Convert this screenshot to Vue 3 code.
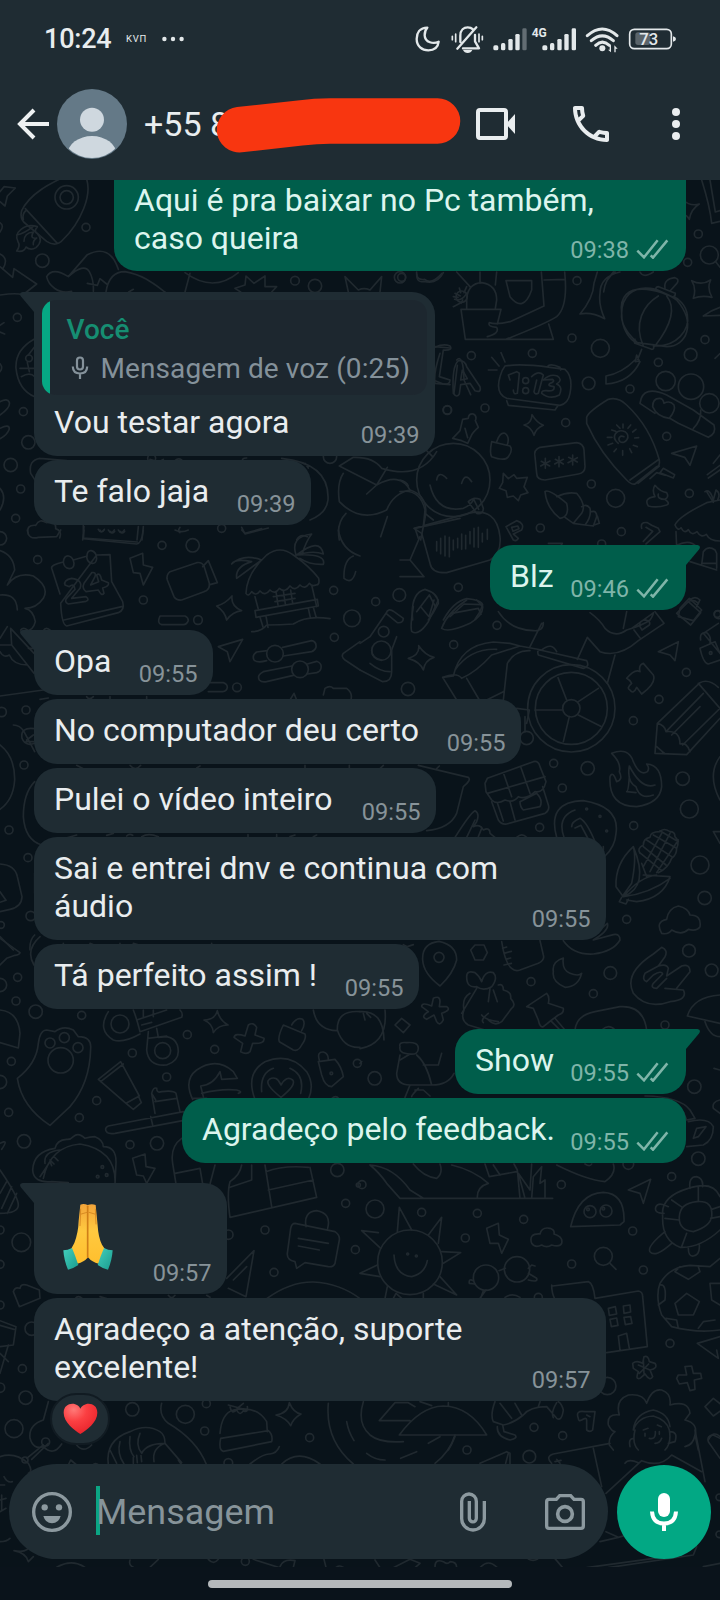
<script setup>
// Wallpaper drawings are grouped in tiles; each tile uses a 3x unit grid.
const tiles = [
  {
    at: 'translate(0 180) scale(.33333)',
    dots: [[200,52,35],[200,52,20],[258,142,12],[127,242,20],[885,302,13],[945,318,20],[1205,292,12],[52,412,12],[87,535,10],[70,695,12],[85,787,20],[32,855,20],[62,927,12],[47,1015,12],[1342,690,13],[990,830,20],[665,1045,12],[455,835,12]],
    paths: [
      'M0 35L12 20 46 24 22 48 15 78 0 65M0 128q14 8 0 28',
      'M65 92C90 40 150 10 205-15M252-20C288 40 235 135 188 180q-20 22-48 4L78 132Q58 118 65 92M76 86L172 190M80 90Q66 100 70 118',
      'M112 140C75 128 38 158 54 185q8 12-4 28 22 5 28-12 14 12 30 2 24-22 4-42-12-8 0-20M72 184q0-26 28-28-12 22 10 18-12 8-10 20M50 165q22-4 50-26',
      'M0 222q28 14 8 45M0 260L38 292 42 266 110 312 72 342M0 345Q50 338 66 344',
      'M205 290Q158 260 140 290C145 315 175 345 215 334Q195 348 180 340M205 290L262 224Q330 190 355 268M205 290Q252 248 268 275 282 300 280 334M262 310l30 6 8-20 20 16M318 336C325 290 350 275 375 275 430 285 460 310 495 336M555 278Q640 340 715 278M570 280L555 336M386 336l14-8',
      'M705 325L735 315 738 288 762 310 795 288 795 320 830 320 815 336M705 325L722 336M1045 336L1035 290 1075 330Q1092 322 1110 330L1145 290 1140 336M1250 282q0 28 22 22 40 10 58-26',
      'M102 478Q45 510 48 565 55 630 104 650M104 500L85 525M82 548L88 575M60 565H104M64 590Q90 575 104 590M0 575q10-12 0-24',
      'M0 665q22-12 28 2 4 16-28 38M0 745q28-14 28 2Q22 765 0 776M0 436l12-8M0 456l14 6',
      'M120 835Q85 840 92 880L110 908M120 835L200 842M450 838q26 10 40 0M525 842q10-10 20-2M740 834q-18 0-10 12M845 835Q990 850 984 960 980 1000 930 1020M915 850l10 14',
      'M0 925Q22 950 0 990M85 1062q-8-28 22-26 12-22 32-8 30-6 28 18 20 6 12 28M252 1040l-4 40M430 1040l-4 40M415 1040l-4 40M295 1048q8 16 18 0M325 1050q8 16 18 0M355 1050q8 16 18 0M540 1042q-8 12 0 16M725 1042l10 20 70-18M890 1080q10-20 32-10M250 1020V1074L412 1086',
      'M1305 500l45 4M1320 520q-20 60-15 90l45 4M1360 380l20-10M1370 540q20-20 22 60l20 44M1362 640l10-84M1060 832Q1120 830 1145 865 1260 900 1310 815M1018 858L1130 915 1162 862M1060 832L1018 858M1130 915L1100 942M1130 915Q1200 875 1230 930 1180 940 1160 990 1080 1030 1018 965 1010 910 1030 880M1230 930Q1290 950 1274 1020L1262 1080M1018 1080q-10-50 20-80M1162 1010l-20 60',
      'M1245 1045L1380 1015M1245 1045l10 30',
    ],
  },
  {
    at: 'translate(400 180) scale(.33333)',
    dots: [[895,162,12],[863,247,12],[928,225,27],[531,302,12],[185,350,17],[516,474,12],[601,505,27],[397,520,12],[214,527,12],[566,610,19],[775,547,12],[872,524,19],[915,479,12],[690,627,12],[142,690,12],[255,684,12],[497,728,12],[797,603,29],[873,620,38],[928,670,29],[800,769,12],[574,912,12],[647,955,27],[868,940,12],[421,1044,12],[664,1055,12],[605,1092,12],[175,1222,12],[160,900,110],[377,602,9],[377,632,9],[0,292,17],[-2,1245,19],[952,1302,10]],
    paths: [
      'M905 0Q930 80 935 130L960 124M930 0q10 60 16 96l14-4M850 60q20 20 48 12-25 15-30 46-8-14-20-14M946 244l14 18',
      'M875 302Q905 318 932 300 920 325 936 352 905 345 880 355 890 325 875 302ZM910 408Q935 390 960 382M910 408l50-2M945 535l15-14',
      'M665 400C650 290 790 330 830 360 890 430 860 500 800 500L712 488Q660 440 665 400M768 328C690 310 665 360 665 400 665 450 690 480 712 490M775 348C730 375 700 430 730 498M800 348C830 385 810 440 765 498M765 498C830 500 870 450 862 405 858 375 835 355 820 350M768 328l52 24q6-2 6-12l-50-20q-10 0-8 8ZM795 325q-5-28 30-32 15 5 5 18l-20 22M705 478q-4 8 0 12l50 18q10 0 4-14M725 508l-12 30M710 525l8 18-12 2ZM705 540Q665 580 618 588V612Q690 608 720 545',
      'M170 276L210 320M240 276V310M290 276L286 315M318 302H395V330Q370 400 330 350ZM424 276L432 378 330 425Q290 435 268 428 262 440 290 442 300 460 262 470M494 276Q505 380 470 410 440 430 318 478M432 300L494 298M200 385V355Q205 310 245 308 290 315 290 360L286 385M183 388H303L292 432M183 388L196 478H460L446 432M200 340q-15 25-36 18M165 340l16 8M178 324l4 14M200 320l-8 18M160 350l14 2M183 370l5-10',
      'M660 276Q600 290 600 340 595 375 614 416 575 395 540 402 580 355 582 310L592 276M645 276q-30 20-34 60M640 276q-15 20 0 0M720 276q10 20 40 0M50 276q-2 26 24 22 20 18 52-18',
      'M105 502Q130 490 150 498 160 512 130 510L118 590Q135 595 150 600 150 615 130 612L105 602M160 640Q155 560 175 542 195 540 200 560L240 620Q245 640 225 632L210 610 182 614 178 642Q170 655 160 640M182 600l5-30 15 26Z',
      'M315 558Q360 550 450 562L495 568Q520 590 510 640 505 670 480 676L320 655Q285 640 300 590 305 570 315 558ZM330 600L325 585 350 575 358 580 352 640Q340 645 340 630M320 662l5 14 140 14 8-12M442 560q8-12 38 2l2 8M303 518l12 28M275 532l22 26M265 570h26M395 590Q415 570 430 585L415 640Q405 645 402 635L410 600M430 600Q450 580 472 588 490 600 470 612 490 620 478 645 450 660 425 640 425 630 440 632 465 635 462 620 440 618 450 610 466 605 458 598 445 598 430 600',
      'M560 712Q565 695 625 658 655 650 680 675 750 740 778 840 780 860 770 860L705 912Q695 915 680 900 600 820 560 730ZM690 900l84-60M714 910l64-52M780 878L790 865 824 884 820 894ZM770 878l25 8M770 878l-20 18M650 735l10 10M635 750l12 4M622 772h14M624 795l14-5M642 815l7-8M668 826v-14M695 818l-6-12M712 800l-12-4M716 773l-12 1M708 748l-10 8M692 735l-8 10M669 732v12M655 790C630 770 650 745 675 755 695 770 675 795 660 785 652 775 660 765 672 770',
      'M720 670C725 630 755 625 800 645L880 690 942 735Q950 760 925 772L835 730 808 714M720 670L765 700M808 715Q770 710 758 680 758 655 778 655 790 655 792 670 810 660 822 675 828 690 808 715ZM902 690Q905 720 880 745',
      'M205 715Q205 700 220 702 232 708 226 722L235 742Q220 755 215 765L203 790 185 782 158 775 180 752 188 718ZM195 745l8 28M275 785L330 798Q340 810 325 830 315 845 275 830 268 820 275 785ZM290 785Q300 755 315 760 330 770 322 795M372 735Q395 730 396 704 410 728 430 736 408 745 402 766 395 742 372 735Z',
      'M405 830Q400 810 420 802L530 788Q550 790 552 810L555 860Q555 878 535 882L435 900Q410 900 410 880ZM436 835v30M424 844l25 14M422 858l28-15M477 830v30M466 838l24 14M464 852l26-14M518 825v30M506 832l26 14M504 848l28-15',
      'M815 820L890 798 870 856 854 832ZM940 850l20-25M922 884l38-28M925 894l35-24M745 978Q730 955 765 950 755 930 765 916 780 935 800 938 808 950 795 958 812 970 800 975 770 985 745 978M775 942q-4 16 20 16',
      'M310 880L325 896 342 884 350 895 382 892 372 920 384 938 362 945 355 962 340 948 322 952 318 932 298 925 308 908ZM435 935Q445 925 500 970 510 1010 480 1015 440 985 435 935M470 950Q500 935 530 940 560 975 545 1000L520 1030 495 1012M545 980Q560 970 570 985 575 1010 555 1035L520 1030M575 995Q590 990 590 1010L580 1038 555 1035M592 1008l6 22-18 6',
      'M110 900Q115 870 140 895M185 910Q195 875 215 905M90 915Q110 1000 190 985 215 975 222 955M205 965Q220 950 240 958L250 985Q250 1005 230 1000ZM222 960l14 28M78 810l20 20M0 900q20 5 25 18M75 1000L100 1020M0 935Q60 925 75 990L70 1040M42 1045L205 1000Q290 980 300 1070 305 1120 270 1140L140 1178Q95 1180 90 1150L65 1060ZM110 1085v28M122 1075v46M135 1068v60M148 1072v58M160 1080v30M173 1075v28M185 1062v46M197 1066v40M210 1055v36M222 1045v56M235 1042v60M247 1060v26M262 1048v30M60 1070L30 1140 72 1190H0M30 1140H0',
      'M318 1040L350 1022Q375 1030 365 1050L340 1062 355 1075Q350 1085 340 1080ZM335 1042l18-4 4 8-18 8ZM725 1045Q720 1025 742 1028L755 1036 775 1045 780 1055 738 1092M738 1042l20 12-28 30M445 1090h42l-6 10',
      'M825 1035Q835 1010 920 968L960 960M920 935l20 32M915 935q15-10 25 25l8-30q15 10 5 30M825 1035q8 20 18 8 10 20 22 6 10 20 26 6 12 20 28 8 10 20 41 20M828 1055L830 1100M905 1155L910 1115Q925 1095 945 1110L950 1120V1165M830 1096q40-20 60 5M870 1145L950 1170M905 1150h45',
      'M38 1320Q30 1240 75 1228 115 1240 115 1270 100 1300 85 1320M50 1295l38-50 18 35M130 1320Q160 1265 200 1256 245 1260 248 1275 240 1300 225 1318M150 1310l42-38 52 2M840 1285L868 1255 905 1290 880 1322 835 1310ZM870 1260Q885 1245 900 1260L890 1280',
    ],
  },
  {
    at: 'translate(0 530) scale(.33333)',
    dots: [[486,46,12],[578,46,20],[113,89,12],[430,210,12],[594,270,13],[1001,181,12],[1056,265,25],[1003,322,12],[825,371,25],[900,418,25],[711,472,13],[5,546,14],[78,540,12],[72,705,12],[27,900,12],[84,983,12],[92,1158,14],[3,1185,10],[0,25,20]],
    paths: [
      'M0 62Q40 75 44 120L22 165Q50 125 100 138 150 170 130 205 110 235 75 235 100 240 106 275 100 300 80 303M0 195Q50 190 52 240',
      'M180 192L155 115Q152 105 190 96M220 90L262 78M290 75L330 74 335 155 368 215Q375 240 355 248L200 288Q185 285 182 220ZM192 270L365 230M335 155L350 182M190 96Q192 76 206 78 220 82 222 100 222 116 208 116 192 114 190 96M260 80Q262 60 274 62 290 66 290 86 288 102 276 100 262 98 260 80M195 165Q190 150 215 145 250 150 240 175L215 205 258 200Q270 210 258 214L205 222Q190 215 202 202L225 178Q222 158 208 170ZM252 160L275 128Q290 125 285 140L272 165 296 155 290 135Q300 125 305 150L325 158Q330 168 308 174L312 190Q305 200 295 180L258 185Q245 175 252 160',
      'M390 85L428 70 430 105 458 112 430 165 420 130 400 128ZM510 125L590 98Q605 95 612 108L628 160Q630 180 612 185L545 210Q530 212 522 200L502 150Q498 135 510 125ZM608 110L625 92 652 158 630 164',
      'M738 190Q740 130 800 75 840 45 880 75 930 110 956 145 960 165 948 165 935 170 928 160 915 180 900 165 885 185 870 168 855 190 838 175 825 195 810 180 795 200 780 183 768 200 755 185 745 202 738 190M695 102Q730 70 785 90L710 145Q705 110 755 95 705 85 695 102M888 75Q870 20 935 12 920 30 905 75M890 75Q960 20 970 72 940 60 890 75 980 70 970 103 930 105 900 85M765 200L775 238M935 165L950 230M765 242L952 208 955 228 768 262ZM780 262l10 32M798 258l6 34M925 235l6 28M940 232l8 28M820 200l65-10M825 215l60-10M828 185l6 40M850 182l6 40M872 180l6 40M755 305Q785 305 800 285 840 285 880 282 920 255 990 266',
      'M650 228Q675 222 696 198 692 228 725 242 698 245 680 270 675 245 650 228ZM480 258H555Q565 262 565 272 560 284 550 284H485Q470 280 480 258ZM655 350L728 328 690 395 682 365ZM802 362L770 366Q755 375 762 390 772 400 800 392M848 352L935 332Q950 335 948 352 945 362 935 365L850 378M876 408L790 425Q770 435 778 450 785 458 800 455L880 436M922 402L950 394Q968 400 962 418 960 425 950 428L922 432M630 458H670Q682 462 682 472 680 484 668 485H625M970 495L975 475Q990 465 1000 475L1040 475Q1060 490 1052 512M870 510L882 490 890 510M1080 335L1030 370Q1022 380 1035 390L1080 420M1015 0Q1025 60 1080 78M1032 145Q1030 90 1060 78M1032 145q25 20 35-20M1012 0',
      'M82 0Q85 30 115 22L170 20 182 0M252 0L250 26 410 42Q425 40 430 0M300 0q5 10 12 0M330 4q8 10 14 0M360 4q8 10 14 0M525 0q20 10 40 0M725 0l10 10 50-14M0 345L35 345 102 430M35 345L32 295 102 370M22 290L0 325M0 365q10 20 28 10Q40 405 82 405M62 300q8-10 20 0M130 302q8-14 22 0M85 355h18M0 498L130 480',
      'M40 585q20 0 32 20L104 665M104 596Q60 590 66 625 75 650 104 640M80 630l20-15M78 635h22M0 645Q45 680 44 750 40 810 0 838M104 755Q70 790 70 860 75 930 125 945L230 915M120 508l25-4M260 500q8 12 20 0M330 500v10M440 500v10M230 706l20 10M390 706q16 20 32 0M590 714l10-6M915 706v10M1048 706v10M320 916l20-6M380 918q8-8 18-2M425 920q20-12 50 0M744 914v10M830 914v10M870 920l15-5M940 920l10-5',
      'M0 1002Q45 1005 52 1040L66 1100Q65 1130 30 1138L0 1145M0 1085l18 26-18 6M0 1220L40 1260M104 1215Q88 1230 90 1260M104 1030v60M190 1240v8M270 1240l20 8M360 1240v8M400 1240l20 6M635 1240v8',
    ],
  },
  {
    at: 'translate(360 600) scale(.33333)',
    dots: [[411,76,12],[281,134,12],[71,95,16],[64,152,29],[144,267,20],[634,325,26],[634,325,108],[634,325,131],[820,362,12],[897,298,12],[979,217,12],[1052,159,4],[500,414,20],[581,490,12],[683,505,20],[607,564,12],[968,536,20],[988,627,27],[539,682,12],[821,677,12],[740,693,3],[720,649,3],[680,627,3],[1020,795,27],[1034,894,20],[800,958,12],[237,1072,15],[987,1052,19],[1055,1111,19],[751,1119,19],[513,1145,12],[700,1181,12],[915,1275,12],[47,5,12],[1075,44,12]],
    paths: [
      'M0 210L68 245Q95 245 95 215V150L110 110M30 110L78 40M0 130L30 110M78 40Q85 22 102 35L130 55Q130 70 112 68ZM30 190Q60 215 90 215M65 180Q35 175 35 150',
      'M145 175Q180 165 176 137 195 165 222 172 195 180 190 210 180 185 145 175ZM160 20Q150 80 155 94 175 110 205 65L235 0M182 20l25 30 15-50M245 85Q260 40 320 0M245 85Q265 100 330 70 370 45 368 20L350 0M275 40l80-15 8 18M1075 70L1030 100 1080 160M950 40L985 5 1022 38 992 75ZM985 5Q1000-5 1015 10M1022 120Q1018 95 1040 98 1055 110 1050 130M1020 145L1065 125 1080 160M1020 145Q1030 190 1045 192L1080 180',
      'M415 35Q450 90 520 92 550 95 550 68M545 70L510 140M690 38Q720 60 735 85 765 115 800 90 850 75 870 60 880 45 880 38M800 35L790 85M815 85L878 40M822 90l20 26M840 80q-4-20 18-20 15 5 10 15l-22 15ZM885 35L912 70 835 122Q775 175 720 155L682 112 652 178M765 165L742 250',
      'M248 232Q290 215 305 235 350 215 395 165L480 138 545 150Q575 125 590 155M248 232L290 300M248 232L280 228Q300 135 400 126L450 130 480 138M285 210Q330 145 410 148M320 235L358 300M430 300L442 190Q465 150 510 152M380 300L430 275M540 150L680 182Q690 200 670 205L535 165Q530 150 540 150M525 330H606M594 233L620 300M655 305L715 265M655 345L725 380M628 350L610 425M500 370L508 330 470 325M495 395V350',
      'M895 155L955 125 945 182 930 165ZM800 235Q825 205 840 215 835 195 850 190L880 225Q890 250 845 282L830 262Q820 285 810 270 798 265 815 250 810 240 800 235ZM885 460L892 370 1020 248Q1045 235 1075 262M885 460L980 464 1080 355M892 370Q915 375 918 395 960 390 960 432 980 425 990 455M918 395L1030 280M935 405L1020 320M968 435L1080 325M1015 250L1080 325M890 440L915 462',
      'M755 460Q805 440 820 485 840 530 862 515 870 505 860 492 905 495 905 560 900 610 830 620 745 620 750 530 758 510 770 545 790 540 778 515 785 490 755 460M808 498Q800 545 828 560 840 600 880 585M808 498Q845 570 885 555M808 530Q805 575 800 575L828 578',
      'M375 550L382 535 520 485Q535 480 540 500L558 545Q550 580 525 575 500 600 475 590 460 610 435 600 410 615 395 600L378 575ZM382 580L555 530M430 518L455 590M482 500L510 580M395 605L415 660Q425 675 440 672L555 640Q570 630 565 615L548 560M450 605L465 660M412 608l18 55M480 605L530 580Q550 600 540 620L490 630Q480 620 480 605M60 506l10-10M230 506l8-8M175 496L325 532Q335 540 310 560L290 640Q270 685 200 692M285 712Q330 640 345 632 360 640 350 665L340 680Q360 670 370 690 390 680 390 700L405 712M345 660L320 712M365 685l-10 25M470 712q16-14 30 0',
      'M590 712Q560 605 670 602 780 620 768 700 765 740 735 768M612 712Q590 650 645 630M635 680Q635 665 660 655 680 665 705 725 M645 684l18-8 20 38M730 740v15M1080 470q-40 55 0 130M1060 695l20 35M1060 695h20',
      'M820 740Q765 790 768 860L790 890Q870 860 820 740M820 740Q830 775 815 850L790 885M850 825L930 830Q910 895 830 905L800 900M845 790L860 830M790 890Q840 830 890 825M790 890Q870 880 930 835M785 892L778 905 798 912 805 898M842 760L905 812M850 740L918 795M860 720L935 770M880 705L950 745M900 692L955 725M850 800L905 700M870 815L930 700M890 818L955 720M840 760Q830 745 850 735 850 715 870 712 870 695 900 695 910 682 930 695 945 695 945 710 960 725 950 745 950 765 935 775 925 805 895 818',
      'M905 1000Q885 965 920 958 925 925 955 918 985 925 990 945 1025 945 1020 980 1010 995 985 988 965 1008 935 990 925 1005 905 1000M610 1022Q640 1065 700 1062 760 1055 780 1020 780 1000 760 1004L700 1020Q750 990 742 970L725 985M425 1025Q435 1090 455 1105 465 1115 480 1110L535 1090Q555 1080 550 1065L540 1022M428 1045l12-4M432 1060l22-6M438 1078l14-4M432 1095l22-5',
      'M188 1080Q185 1030 237 1024 290 1035 290 1080 280 1120 240 1158 190 1120 188 1080M332 1050L345 1035H372L382 1058 370 1080H345ZM130 1034l12 6 18-6M580 1115Q575 1085 610 1074 605 1110 630 1120 655 1130 665 1120 655 1160 615 1162 575 1145 580 1115M820 1180Q790 1120 880 1062L905 1042Q925 1050 915 1070L895 1098 M895 1098Q920 1090 925 1105L920 1128 965 1098Q990 1090 990 1115L950 1165M895 1098L855 1120Q845 1140 860 1145L880 1125Q905 1110 908 1122L880 1150Q870 1165 890 1165L920 1135M915 1165L970 1170Q985 1200 930 1205 860 1230 820 1180',
      'M320 1130Q320 1110 345 1118 360 1130 365 1145 375 1110 400 1118 415 1135 395 1160 370 1175 350 1160 320 1165 320 1130M350 1165L305 1240M390 1165L385 1205M415 1155Q430 1150 430 1170 455 1175 452 1195 470 1215 455 1225L425 1265Q405 1280 385 1260M400 1170l12 35M385 1240q-25 20-15 28M365 1245q10 15 50 20M330 1180Q305 1195 312 1230 300 1260 325 1275L375 1290M185 1220Q185 1205 215 1218L220 1195Q240 1185 240 1205L238 1220 260 1220Q275 1230 245 1240L250 1260Q240 1280 230 1265L222 1245 200 1258Q180 1250 205 1235ZM105 1275L125 1255 150 1275 130 1298ZM500 1220L560 1180Q570 1190 565 1210L610 1225Q612 1240 595 1245L575 1260 550 1280Q540 1285 535 1260L520 1225ZM575 1265L600 1290M585 1255L615 1290M645 1290Q650 1245 705 1235L780 1220Q850 1215 860 1290M725 1290q22-20 40 0M1080 1185Q1000 1190 982 1248L1080 1270M1035 1265Q1050 1310 1080 1310M0 1235Q70 1230 72 1320M10 1240l5 20M20 1240l12 12',
    ],
  },
  {
    at: 'translate(0 930) scale(.33333)',
    dots: [[53,142,12],[0,165,20],[48,213,12],[107,245,20],[245,256,12],[562,314,12],[34,394,12],[397,369,12],[644,358,12],[500,441,12],[360,282,27],[488,362,24],[150,339,15],[193,323,15],[234,353,15],[182,391,38],[0,456,20],[26,547,12],[290,512,12],[238,563,12],[72,634,20],[390,644,12],[471,640,20],[307,711,4],[293,740,4],[320,735,4],[1012,720,20],[1037,820,12],[795,900,12],[685,914,14],[64,937,28],[0,900,12],[0,1003,12],[1066,959,12],[822,1027,12],[95,1196,20],[994,430,4],[1072,400,12],[1075,765,6]],
    paths: [
      'M0 25L60 68Q58 74 45 76L20 85 0 105M102 105Q75 60 120 20M0 240Q55 245 60 310L55 354 0 338M52 445Q110 400 115 340 120 300 140 300L165 305Q190 285 220 300L235 320Q275 320 272 355 270 460 210 530L150 586Q65 530 52 445',
      'M325 245Q290 300 340 330 370 340 420 312M400 240Q410 265 420 305M420 305L545 262Q550 250 540 240M410 270L500 240M425 285l30-8M430 240v20M460 240v20M445 305L440 360Q445 410 500 405 545 390 532 345 525 325 500 320L475 322 470 295M443 325L500 318M295 448L362 395 418 498 378 520ZM302 455L370 402M378 520L400 538 424 518 415 498',
      'M465 550L455 490Q460 470 470 475 470 490 485 485 520 480 528 490L540 545M465 515L530 505M455 490l12 20M550 545L325 588Q310 595 322 608 328 612 345 610L548 572M452 560L458 585',
      'M612 270Q645 270 652 242 658 270 684 285 655 285 640 308 638 280 612 270ZM702 322Q705 308 735 318L745 285Q760 275 770 292L765 315 792 325Q795 342 758 340L750 365Q740 375 722 365L728 340ZM850 285L915 312Q920 325 905 345 895 365 880 360L838 335Q832 322 850 285ZM875 285Q890 260 908 268 918 280 905 302M955 395L1005 388Q1025 410 1030 440L995 470Q975 470 965 435ZM958 390Q950 365 970 366 985 370 985 388M940 240Q950 300 1010 302M1080 245Q1010 240 1012 300 1030 355 1080 352',
      'M578 508Q550 450 590 420 650 380 700 425L712 445 665 448 660 425Q640 465 602 468L610 500M605 490q60-15 105-10 20 5 5 10M580 505h40M765 508Q735 430 795 395 870 365 920 425 945 465 925 508M785 485Q780 430 820 415M870 415Q915 435 902 490M843 502Q790 460 808 448 830 435 843 465 860 435 878 450 890 465 843 502ZM995 506q12-12 22 0',
      'M98 720Q100 665 165 655 170 630 200 628 210 630 220 620 235 605 255 625 270 620 285 620 310 630 310 650 350 650 348 700L345 762M98 720Q100 760 155 755L205 758M130 745Q150 650 240 642 350 660 345 762M135 700Q130 665 180 660M150 690l12 12M162 680l12 12M120 740l30-45 5 12M0 640q28-15 5 18',
      'M398 685L435 672 438 710 465 715 440 760 430 738 410 735ZM545 625Q510 650 518 700L528 762M525 730L600 715M600 715L608 762M645 705L630 762M725 705Q720 735 690 755M755 705v45L690 772M690 755Q680 790 690 862M795 705L815 830M690 862L950 802 930 712M805 780L940 750M798 725Q850 705 925 712M0 720Q55 800 55 825 55 850 0 850M0 790L20 755M5 835L35 770M22 850L50 790',
      'M918 890Q910 845 950 842 995 850 983 895M885 880L1005 905Q1020 915 1018 930L1005 1000Q1000 1012 985 1010L915 998 890 1015 885 995Q860 990 862 970L872 895Q875 880 885 880ZM895 925L985 940M895 948L958 960M680 1045L762 962 738 1100 685 1075M700 1050L740 1010M800 1106Q870 1055 940 1056 1020 1060 1080 1106M40 1085Q45 1070 60 1075 62 1060 80 1065L118 1080 120 1105 58 1130ZM0 1172L48 1190 40 1245 0 1250M0 1186l42 12M505 1096q10 14 20 0M620 1096l10 6M225 1106q10-12 22 0M300 1100l20 6M730 1100',
    ],
  },
  {
    at: 'translate(360 1010) scale(.33333)',
    dots: [[44,205,20],[1003,230,20],[1015,446,20],[6,524,12],[45,597,27],[185,607,12],[352,610,12],[491,628,12],[604,524,12],[316,684,12],[935,500,12],[818,663,12],[690,605,18],[738,603,18],[635,762,12],[850,780,12],[730,739,27],[150,757,97],[378,803,38],[471,778,38],[143,732,3],[169,738,3],[522,1252,12],[608,1277,12],[930,1000,12],[742,1128,26],[535,862,12],[805,462,16],[684,598,4],[730,596,4]],
    paths: [
      'M75 0q10 100-75 116M120 110Q115 95 140 98 175 95 175 115 175 135 150 132 115 130 120 110M120 135L110 190Q110 225 150 225H215Q200 160 170 135M150 132L120 150M190 165H235L245 130M215 225Q265 225 282 190M150 225L135 262M165 240h25l20 18M175 235q-20 20-20 25M0 160q10-10 0 0',
      'M30 465Q60 490 80 520L120 565H578M30 465Q100 470 150 540L190 565M160 462Q190 500 230 505 250 490 240 462M275 465Q340 480 385 520 350 530 352 565M375 462L388 500 470 485M400 465l20 30M480 565L472 480 462 462M495 565L475 490 510 540 515 462M515 565L520 500 545 470 540 520 555 510V565M590 465Q680 510 735 515 770 490 760 462M675 462q15 10 20 0M855 258Q960 260 990 300L1005 325 980 330M925 270Q970 290 980 330M985 335Q1045 320 1060 350 1060 390 1030 405L980 410M1000 385L1010 355 1038 350 1015 380ZM1080 270Q1055 275 1060 295L1080 310M1062 175l18 5',
      'M632 650Q655 550 730 547 795 550 792 635L780 645ZM805 540L872 508 850 580 840 550ZM380 655L415 640 418 675 445 688 425 730 415 700 390 700ZM515 700Q505 670 540 672 545 650 570 655 585 660 582 672 610 680 605 700 600 712 575 705 560 715 545 705 525 715 515 700ZM750 760L768 778',
      'M55 668L5 662 62 715M52 765L0 790 60 800M112 665L118 592 155 660M205 675L245 622 235 700M245 725L302 728 250 760M240 800L290 855 220 822M75 865L82 830M100 865L108 850 125 865M190 865V850M102 735Q105 795 155 800 195 790 202 752M417 782L436 775M340 812Q325 805 328 820L345 822M505 775L515 765 525 768M505 790L530 805Q535 818 505 810M370 842L362 865M360 865L378 840M435 862q22-15 45 0',
      'M575 825Q575 850 585 868M578 828L685 815Q700 820 705 865M705 865L835 843Q848 845 848 860L862 1010 740 1028M745 895L766 890 770 912 748 916ZM790 888L810 885 812 906 792 910ZM750 928L770 924 774 946 754 950ZM792 922L812 920 816 940 796 944ZM780 1020L775 978 800 970 808 1015',
      'M908 620Q900 560 985 535 1060 510 1080 560M908 620Q905 690 960 712 1020 715 1080 660M958 620Q960 580 1010 575 1060 570 1055 620 1050 650 1000 665 955 660 958 620ZM990 535Q985 500 1010 500 1030 505 1028 530M912 610Q880 610 888 590 895 575 925 590M915 665Q860 710 870 725 885 745 935 700M985 715Q985 740 1000 738 1020 735 1018 705M915 625l42 5M935 570l32 22M1015 530v42M965 710l15-40M1080 620l-28 5M1080 590l-25 8',
      'M1080 960Q1010 970 935 950L905 915Q885 860 900 820 930 770 990 766L1050 770 1080 745M945 880L980 850 1018 875 1000 915H955ZM945 785L985 808 1020 785M945 785L960 770M1020 785L1015 770M900 825Q920 820 915 870L895 885M1050 820L1080 820M1050 820L1055 870 1080 885M918 925L950 930 955 955M1015 955L1030 935 1065 930M1012 1000L1080 980M1012 1000L1075 1045 1070 1020',
      'M818 1060Q830 1050 848 1060L852 1040Q865 1035 868 1055L885 1060Q895 1075 870 1080L878 1100Q870 1115 855 1092L840 1105Q825 1110 835 1085L820 1075ZM835 1065l35 15M850 1050l2 40M838 1090l28-28M950 1105L955 1095 980 1095 975 1070 995 1068 1000 1090 1022 1090 1025 1105 1003 1110 1005 1138 990 1142 982 1118 958 1122ZM1035 1190L1060 1165 1085 1185M1035 1190L1060 1218 1085 1200',
      'M745 1245Q740 1210 778 1215 765 1170 805 1155 850 1150 860 1180 875 1135 905 1140 935 1150 930 1185 985 1170 990 1210L975 1230Q1015 1240 1005 1275 1000 1305 975 1310M745 1245Q755 1265 765 1265 745 1280 748 1305L760 1320M820 1260Q825 1210 880 1200 925 1210 930 1250M820 1260Q835 1220 880 1218 920 1230 928 1260M825 1260Q815 1300 835 1320M928 1260Q935 1300 915 1320M820 1285Q805 1285 810 1310M930 1265Q955 1265 945 1295L925 1300M850 1260l14-5M892 1245l12 5M855 1270v8M898 1265v8M868 1285q20 5 18-20M885 1300q15 0 20-15M1005 1275L1015 1320M1045 1290Q1060 1260 1080 1280M655 1225Q645 1200 675 1205L705 1205 698 1260Q690 1268 680 1260V1230Q680 1220 665 1230 655 1235 655 1225M680 1215l10 5',
      'M10 1175Q-10 1240 30 1275 60 1300 130 1295M58 1232L105 1178H145L165 1190M58 1232H150M118 1275Q180 1190 250 1188 330 1190 380 1275ZM205 1300L240 1280M285 1280Q275 1305 265 1320M180 1175l35 12M265 1178v10M405 1175Q390 1215 400 1235L430 1245Q460 1240 490 1215M420 1180L455 1225M465 1180L485 1215M490 1215Q510 1190 560 1190L590 1225Q605 1235 610 1200 605 1180 595 1175M540 1175l-5 15M590 1178q-18 30-10 45M412 1250Q410 1280 450 1290 475 1285 465 1275L432 1265 428 1245',
    ],
  },
  {
    at: 'translate(0 1290) scale(.33333)',
    dots: [[67,236,12],[0,293,14],[77,323,20],[42,416,27],[137,456,12],[397,358,20],[556,373,27],[614,423,12],[929,443,12],[619,341,12],[685,519,13],[736,814,12],[75,510,9],[0,45,12]],
    paths: [
      'M0 190L25 215M0 250L25 165M145 335L130 390Q85 405 90 445 100 480 130 470 160 500 185 462M130 465L80 505M145 460L95 508M230 465q20 25 45 0M85 520Q100 545 85 550M0 500Q45 485 85 520M205 525L212 510 230 525M278 525q8-8 18 0M12 560q10 20 25 15M0 585h14M0 630l18-5M0 665l18-10M5 615v45M0 755Q20 755 30 745',
      'M325 525Q315 450 390 425 440 400 480 425 495 435 495 460L545 518M495 460Q455 475 462 515M420 430Q405 465 425 490 440 460 495 460M390 440Q385 480 402 500M360 455Q350 490 372 522M330 480L350 520M400 520v-18M412 518l-2-22M425 515l-2-18M535 510l10 15',
      'M485 340Q475 375 505 400 590 450 620 525M660 430Q665 370 700 360 770 345 800 395L802 425M662 445L805 422Q820 435 815 455L670 484Q655 480 662 445ZM690 350Q695 375 710 360 720 380 730 362 745 370 742 350M685 345l55 15M700 365l30-25M828 375Q865 370 868 338 880 368 903 372 880 385 872 407 860 385 828 375ZM750 522Q790 490 810 492 830 490 838 470M845 522Q895 475 960 522M985 340Q975 450 1060 522M1040 395Q1045 425 1062 452',
      'M42 782Q85 790 90 765M42 782Q80 790 85 815L100 800M170 832Q215 805 255 832M390 810Q385 825 400 832M475 808L450 832M625 808q16 18 30 0M760 808L835 832M840 830Q850 805 885 812L880 832M972 808L978 832M1008 832q12-8 22 0',
    ],
  },
  {
    at: 'translate(360 1400) scale(.33333)',
    dots: [[321,150,12],[508,170,19],[1078,292,10],[1078,403,10]],
    paths: [
      'M20 160Q45 180 75 180M122 175L170 155M285 105Q270 155 225 190M360 190L440 155 450 160V192M445 160l-8 30M575 190Q555 170 580 162L750 130M585 185l18-4M590 178l10 12M700 145L725 260M738 280L845 182Q900 205 935 165L1025 215M1005 90L1035 245M795 190Q805 175 835 188M1045 125Q1040 105 1060 105L1080 115M1045 125L1080 175M738 395L775 412 720 425M775 412L800 405M680 503L920 470M745 503L1000 465 1010 440M1030 500L1080 490M45 480L60 503M100 503L150 478 180 490 165 503M225 500Q225 475 250 485 262 495 270 485 290 485 290 503M360 503Q385 475 412 503M505 477q14 8 28 0M585 476L608 503',
    ],
  },
]

const messages = [
  { id: 1, side: 'out', text: 'Aqui é pra baixar no Pc também,\ncaso queira', time: '09:38', w: 572, gap: 0, cut: true },
  { id: 2, side: 'in', tail: true, quote: true, text: 'Vou testar agora', time: '09:39', w: 401, gap: 21 },
  { id: 3, side: 'in', text: 'Te falo jaja', time: '09:39', w: 277, gap: 4 },
  { id: 4, side: 'out', tail: true, text: 'Blz', time: '09:46', w: 196, gap: 20 },
  { id: 5, side: 'in', tail: true, text: 'Opa', time: '09:55', w: 179, gap: 20 },
  { id: 6, side: 'in', text: 'No computador deu certo', time: '09:55', w: 487, gap: 4 },
  { id: 7, side: 'in', text: 'Pulei o vídeo inteiro', time: '09:55', w: 402, gap: 4 },
  { id: 8, side: 'in', text: 'Sai e entrei dnv e continua com\náudio', time: '09:55', w: 572, gap: 4 },
  { id: 9, side: 'in', text: 'Tá perfeito assim !', time: '09:55', w: 385, gap: 4 },
  { id: 10, side: 'out', tail: true, text: 'Show', time: '09:55', w: 231, gap: 20 },
  { id: 11, side: 'out', text: 'Agradeço pelo feedback.', time: '09:55', w: 504, gap: 4 },
  { id: 12, side: 'in', tail: true, pray: true, time: '09:57', w: 193, gap: 20 },
  { id: 13, side: 'in', text: 'Agradeço a atenção, suporte\nexcelente!', time: '09:57', w: 572, gap: 4, heart: true },
]
</script>

<template>
  <div class="phone">
    <header class="top">
      <div class="status">
        <span class="clock">10:24</span>
        <span class="vpn">KVП</span>
        <svg class="more" width="22" height="6" viewBox="0 0 22 6"><circle cx="2.4" cy="3" r="2.2" /><circle cx="11" cy="3" r="2.2" /><circle cx="19.6" cy="3" r="2.2" /></svg>
        <svg class="tray" width="270" height="34" viewBox="160 65 810 102">
          <g fill="none" stroke="#e3e8ea" stroke-width="7" stroke-linecap="round" stroke-linejoin="round">
            <path d="M203 82C180 82 171 98 171 116 171 138 187 150 206 150 222 150 235 142 237 124 222 132 196 127 195 105 195 95 197 88 203 82Z" />
            <path d="M302 125V106C302 88 313 81 324 81 331 81 337 84 340 87M346 104V123L358 144H310M293 145L350 81" />
            <path d="M288 101V124M278 108V118M358 101V124M368 108V118" stroke-width="5" />
            <path d="M683 106Q728 66 772 106M695 121Q728 92 761 121M708 135Q728 116 749 135" stroke-width="9" />
            <rect x="810" y="87" width="125" height="58" rx="14" stroke-width="5" />
          </g>
          <g fill="#e3e8ea">
            <path d="M310 149H338Q334 158 324 158 314 158 310 149Z" />
            <rect x="401" y="135" width="15" height="15" rx="5" /><rect x="424" y="128" width="13" height="22" rx="5" /><rect x="446" y="116" width="13" height="34" rx="4" /><rect x="467" y="101" width="13" height="49" rx="4" />
            <rect x="488" y="84" width="13" height="66" rx="4" opacity=".35" />
            <rect x="548" y="135" width="15" height="15" rx="5" /><rect x="571" y="128" width="13" height="22" rx="5" /><rect x="593" y="116" width="13" height="34" rx="4" /><rect x="614" y="101" width="13" height="49" rx="4" /><rect x="636" y="84" width="13" height="66" rx="4" />
            <circle cx="728" cy="144" r="9" />
            <path d="M754 135V156L745 148H750V135ZM764 156V135L774 145H768V156Z" />
            <rect x="827" y="96" width="45" height="38" rx="8" opacity=".3" />
            <path d="M940 108Q949 110 949 116 949 122 940 124Z" />
            <text class="net" x="516" y="111">4G</text>
            <text class="batt" x="839" y="134">73</text>
          </g>
        </svg>
      </div>
      <div class="bar">
        <svg class="back" width="34" height="34" viewBox="0 0 34 34"><path d="M18 3L4 17L18 31M4 17H33" fill="none" stroke="#eef1f2" stroke-width="4" /></svg>
        <svg class="avatar" width="70" height="70" viewBox="0 0 210 210">
          <clipPath id="round"><circle cx="105" cy="105" r="102" /></clipPath>
          <circle cx="105" cy="105" r="105" fill="#647987" />
          <g fill="#cfd8df" clip-path="url(#round)"><circle cx="105" cy="92" r="36" /><ellipse cx="105" cy="196" rx="73" ry="55" /></g>
        </svg>
        <div class="title">
          <span>+55 8</span>
          <svg class="scribble" width="250" height="60" viewBox="214 94 250 60"><path d="M239.500 129.700L300 123Q316 121 330 121H437.500" fill="none" stroke="#f83610" stroke-width="45.500" stroke-linecap="round" stroke-linejoin="round" /></svg>
        </div>
        <svg class="video" width="42" height="34" viewBox="0 0 42 34"><rect x="3" y="3" width="28" height="28" rx="2" fill="none" stroke="#e9edef" stroke-width="4" /><path d="M31 17L40 7V27Z" fill="#e9edef" /></svg>
        <svg class="call" width="48" height="48" viewBox="0 0 24 24"><path fill="#e9edef" d="M6.540 5c.06.890.210 1.760.450 2.590l-1.200 1.200c-.410-1.200-.670-2.470-.760-3.790h1.510m9.860 12.020c.850.240 1.720.390 2.600.450v1.490c-1.320-.09-2.590-.350-3.800-.750l1.200-1.190M7.500 3H4c-.550 0-1 .450-1 1 0 9.390 7.610 17 17 17 .550 0 1-.450 1-1v-3.490c0-.550-.450-1-1-1-1.240 0-2.450-.2-3.570-.570-.1-.04-.210-.05-.310-.05-.260 0-.510.1-.710.290l-2.200 2.200c-2.830-1.450-5.150-3.760-6.590-6.590l2.200-2.200c.280-.280.360-.670.250-1.020C8.700 6.450 8.500 5.250 8.500 4c0-.550-.450-1-1-1z" /></svg>
        <svg class="menu" width="10" height="34" viewBox="0 0 10 34"><g fill="#e9edef"><circle cx="5" cy="5" r="4" /><circle cx="5" cy="17" r="4" /><circle cx="5" cy="29" r="4" /></g></svg>
      </div>
    </header>

    <main class="chat">
      <svg class="wall" viewBox="0 180 720 1387" width="720" height="1387">
        <g v-for="(t, i) in tiles" :key="i" :transform="t.at">
          <path v-for="(d, j) in t.paths" :key="'p' + j" :d="d" />
          <circle v-for="(c, j) in t.dots" :key="'c' + j" :cx="c[0]" :cy="c[1]" :r="c[2]" />
        </g>
      </svg>

      <section class="list">
        <div
          v-for="m in messages"
          :key="m.id"
          class="bubble"
          :class="[m.side, { tail: m.tail, cut: m.cut, pray: m.pray }]"
          :style="{ width: m.w + 'px', marginTop: m.gap + 'px' }"
        >
          <svg v-if="m.tail" class="corner" width="15" height="24" viewBox="0 0 15 24"><path d="M2.500 0H15V21L14 20L1 4.500Q-1.500 .5 2.500 0Z" /></svg>
          <div v-if="m.quote" class="quote">
            <strong>Você</strong>
            <div class="voice">
              <svg width="18" height="24" viewBox="0 0 18 24"><g fill="none" stroke="#84919a" stroke-width="2.200"><rect x="6" y="1.500" width="6" height="12" rx="3" /><path d="M1.800 10.500Q2 17.500 9 17.500 16 17.500 16.200 10.500M9 17.500V23" /></g></svg>
              <span>Mensagem de voz (0:25)</span>
            </div>
          </div>
          <svg v-if="m.pray" class="hands" width="52" height="68" viewBox="188 822 156 204">
            <defs>
              <linearGradient id="skin" x1="0" y1="0" x2="0" y2="1"><stop offset="0" stop-color="#f2a43a" /><stop offset=".45" stop-color="#ffc93f" /><stop offset="1" stop-color="#ffbf2e" /></linearGradient>
              <linearGradient id="cuff" x1="0" y1="0" x2="1" y2="1"><stop offset="0" stop-color="#43cfbd" /><stop offset="1" stop-color="#1a9c8e" /></linearGradient>
            </defs>
            <path d="M243 827Q253 823 265 828 278 823 289 828L295 890Q297 925 308 947L318 962 298 1004Q278 1000 266 985 254 1000 234 1004L214 962 225 942Q237 910 238 875Z" fill="url(#skin)" />
            <path d="M265 832V985" fill="none" stroke="#d07f18" stroke-width="5" stroke-linecap="round" />
            <path d="M246 855L263 850M269 850L286 855M244 840L242 890M288 840L290 885" fill="none" stroke="#d88a22" stroke-width="3" stroke-linecap="round" />
            <path d="M192 964Q205 964 218 957 228 980 237 1008 225 1017 206 1022 194 995 192 964Z" fill="url(#cuff)" /><path d="M340 964Q326 964 314 957 304 980 295 1008 307 1017 326 1022 338 995 340 964Z" fill="url(#cuff)" />
          </svg>
          <p v-if="m.text">{{ m.text }}</p>
          <div class="meta">
            <time>{{ m.time }}</time>
            <svg v-if="m.side === 'out'" width="33" height="20" viewBox="0 0 99 60"><path d="M4 35L24 55L65 4M44 49L51 56L94 4" fill="none" stroke="#7fb5a9" stroke-width="7.500" /></svg>
          </div>
          <div v-if="m.heart" class="react">
            <svg width="35" height="32" viewBox="0 0 105 96">
              <defs><radialGradient id="love" cx=".3" cy=".2" r=".85"><stop offset="0" stop-color="#ff7a78" /><stop offset=".45" stop-color="#fb3f42" /><stop offset="1" stop-color="#e8232b" /></radialGradient></defs>
              <path d="M52 93C35 82 2 58 2 29 2 10 15 2 28 2 40 2 49 9 52 17 56 9 65 2 77 2 90 2 103 10 103 29 103 58 70 82 52 93Z" fill="url(#love)" />
            </svg>
          </div>
        </div>
      </section>

      <footer class="composer">
        <div class="field">
          <svg class="smile" width="40" height="40" viewBox="0 0 120 120"><circle cx="60" cy="60" r="55" fill="none" stroke="#8c999f" stroke-width="10" /><g fill="#8c999f"><circle cx="38" cy="46" r="9.500" /><circle cx="81" cy="46" r="9.500" /><path d="M34 72H86Q80 94 60 94 40 94 34 72Z" /></g></svg>
          <div class="input">Mensagem</div>
          <svg class="clip" width="26" height="40" viewBox="0 0 78 120"><path d="M73 27V80A34 34 0 0 1 5 80V28A22 22 0 0 1 49 28V79A10.500 10.500 0 0 1 28 79V27" fill="none" stroke="#8c999f" stroke-width="10" /></svg>
          <svg class="cam" width="40" height="36" viewBox="0 0 120 108"><path d="M12 16H34L44 5H77L87 16H108Q115 16 115 23V96Q115 103 108 103H12Q5 103 5 96V23Q5 16 12 16Z" fill="none" stroke="#8c999f" stroke-width="10" /><circle cx="60" cy="60" r="22" fill="none" stroke="#8c999f" stroke-width="11" /></svg>
        </div>
        <button class="mic">
          <svg width="30" height="40" viewBox="0 0 30 40"><rect x="9" y="1" width="12" height="24" rx="6" fill="#fff" /><path d="M3 19.500C3.500 28 8 31.500 15 31.500S26.500 28 27 19.500M15 31V39" fill="none" stroke="#fff" stroke-width="4" /></svg>
        </button>
      </footer>
    </main>
    <div class="nav"><i></i></div>
  </div>
</template>

<style>
body { margin: 0; background: #09131a; }
</style>

<style scoped>
.phone {
  width: 720px;
  height: 1600px;
  overflow: hidden;
  display: flex;
  flex-direction: column;
  background: #09131a;
  font-family: Roboto, "Liberation Sans", sans-serif;
}
.top { position: relative; z-index: 2; height: 180px; background: #1f2c33; color: #e9edef; }
.status { display: flex; align-items: center; height: 68px; padding: 10px 0 0 44px; box-sizing: border-box; }
.clock { width: 82px; font-size: 27px; font-weight: 500; line-height: 32px; letter-spacing: -.2px; }
.vpn { width: 36px; font-size: 9.500px; letter-spacing: .8px; line-height: 12px; }
.more { fill: #e3e8ea; }
.tray { margin-left: 229px; }
.net { font: 700 36px Roboto, sans-serif; }
.batt { font: 500 50px Roboto, sans-serif; }
.bar { display: flex; align-items: center; height: 112px; }
.bar > * { flex: none; }
.back { margin-left: 16px; }
.avatar { margin-left: 7px; }
.title { position: relative; width: 330px; margin-left: 17px; font-size: 34px; line-height: 40px; }
.scribble { position: absolute; left: 70px; top: -10px; }
.video { margin-left: 1px; }
.call { margin-left: 50px; }
.menu { margin-left: 55.500px; }

.chat { position: relative; height: 1387px; display: flex; flex-direction: column; overflow: hidden; }
.wall { position: absolute; left: 0; top: 0; fill: none; stroke: #20292f; stroke-width: 5; stroke-linecap: round; stroke-linejoin: round; }
.list { position: relative; height: 1284px; display: flex; flex-direction: column; padding: 0 34px; }
.bubble {
  position: relative;
  flex: none;
  box-sizing: border-box;
  padding: 12px 16px 15px 20px;
  border-radius: 23px;
  background: #1f2c33;
  color: #e9edef;
}
.bubble.in { align-self: flex-start; }
.bubble.out { align-self: flex-end; background: #005e4b; color: #dcf5ee; }
.bubble.in.tail { border-top-left-radius: 0; }
.bubble.out.tail { border-top-right-radius: 0; }
.bubble.cut { padding-top: .5px; padding-bottom: 14.500px; border-radius: 0 0 23px 23px; }
.bubble p { margin: 0; font-size: 32px; line-height: 38px; white-space: pre; }
.corner { position: absolute; left: -14px; top: 0; fill: #1f2c33; }
.out .corner { left: auto; right: -14px; transform: scaleX(-1); fill: #005e4b; }
.meta { position: absolute; right: 15.500px; bottom: 7px; display: flex; align-items: center; color: #879399; }
.meta time { font-size: 23.600px; line-height: 28px; }
.out .meta { right: 17px; color: #7fb5a9; }
.meta svg { margin: 0 0 3px 7px; }
.quote {
  height: 95px;
  margin: -4px -8px 8px -12px;
  box-sizing: border-box;
  padding: 12px 0 0 24.500px;
  border-radius: 14px;
  background: linear-gradient(90deg, #06a884 8px, #1d272f 8px);
}
.quote strong { display: block; font-size: 28px; font-weight: 500; line-height: 36px; color: #168e72; }
.voice { display: flex; align-items: center; height: 40px; font-size: 28px; letter-spacing: .1px; color: #84919a; }
.voice svg { margin: 0 12px 0 4px; }
.pray { height: 111px; }
.hands { display: block; margin: 8px 0 0 8px; }
.react {
  position: absolute;
  left: 16px;
  top: 95px;
  width: 60px;
  height: 52px;
  box-sizing: border-box;
  border: 2px solid #111b22;
  border-radius: 26px;
  background: #1f2c33;
  display: flex;
  align-items: center;
  justify-content: center;
}
.composer { position: relative; display: flex; align-items: center; padding-left: 9px; height: 95px; }
.field { display: flex; align-items: center; width: 599px; height: 95px; border-radius: 48px; background: #1f2c33; }
.smile { margin-left: 23px; }
.input { width: 356px; height: 49px; margin-left: 24px; margin-top: -3px; border-left: 4px solid #0ba584; box-sizing: border-box; font-size: 35.900px; line-height: 53px; color: #87949a; text-indent: -4px; }
.clip { margin-left: 8px; }
.cam { margin-left: 59px; }
.mic { width: 94px; height: 94px; margin-left: 9px; padding: 0; border: 0; border-radius: 50%; background: #02a884; display: flex; align-items: center; justify-content: center; }
.nav { height: 33px; background: #0a131b; display: flex; justify-content: center; }
.nav i { width: 304px; height: 8px; margin-top: 13px; border-radius: 4px; background: #b5b9bc; }
</style>
